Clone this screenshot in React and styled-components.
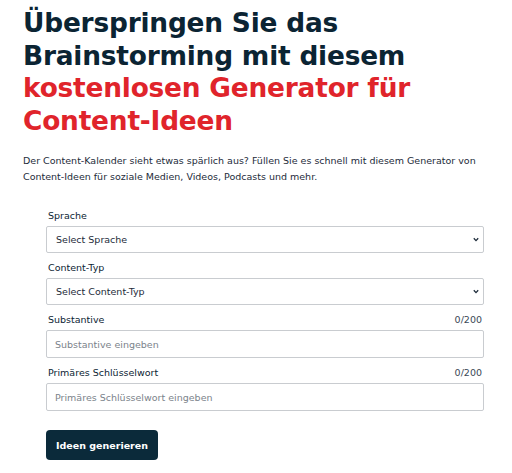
import React from 'react';
import styled, { createGlobalStyle } from 'styled-components';

const GlobalStyle = createGlobalStyle`
  html, body {
    margin: 0;
    padding: 0;
    background: #ffffff;
  }
  * {
    box-sizing: border-box;
  }
`;

const Page = styled.div`
  padding: 7px 23px 0 23px;
  font-family: "DejaVu Sans", "Open Sans", sans-serif;
  color: #0b2433;
`;

const Heading = styled.h1`
  margin: 0;
  font-size: 26.4px;
  line-height: 32.5px;
  font-weight: 700;
  letter-spacing: -0.2px;
  color: #0b2433;
`;

const Accent = styled.span`
  color: #e0242b;
`;

const Intro = styled.p`
  margin: 16px 0 0 0;
  font-size: 9.5px;
  line-height: 16px;
  color: #1d2b3a;
`;

const Form = styled.form`
  margin: 24px 0 0 23px;
  width: 438px;
  display: flex;
  flex-direction: column;
`;

const Field = styled.div`
  display: flex;
  flex-direction: column;
  margin-bottom: 8px;
`;

const LabelRow = styled.div`
  display: flex;
  justify-content: space-between;
  align-items: baseline;
  padding: 0 2px;
  font-size: 9.5px;
  line-height: 13px;
  margin-bottom: 4px;
  color: #0b2433;
`;

const Counter = styled.span`
  color: #3a4856;
`;

const SelectWrap = styled.div`
  position: relative;
`;

const Select = styled.select`
  appearance: none;
  width: 100%;
  height: 27px;
  padding: 0 20px 0 9px;
  border: 1px solid #c9ccd0;
  border-radius: 2px;
  background: #ffffff;
  font-family: inherit;
  font-size: 9.5px;
  color: #1d2b3a;
  outline: none;
`;

const Chevron = styled.svg`
  position: absolute;
  right: 5px;
  top: 11px;
  width: 6px;
  height: 5px;
  pointer-events: none;
`;

const Input = styled.input`
  width: 100%;
  height: 28px;
  padding: 0 8px;
  border: 1px solid #c9ccd0;
  border-radius: 2px;
  font-family: inherit;
  font-size: 9.5px;
  color: #1d2b3a;
  outline: none;
  &::placeholder {
    color: #7b838b;
  }
`;

const Button = styled.button`
  align-self: flex-start;
  margin-top: 11px;
  width: 112px;
  height: 30px;
  border: none;
  border-radius: 4px;
  background: #0b2a3a;
  color: #ffffff;
  font-family: inherit;
  font-weight: 700;
  font-size: 9.5px;
  cursor: pointer;
`;

const SelectField = ({ label, placeholder }) => (
  <Field>
    <LabelRow>
      <span>{label}</span>
    </LabelRow>
    <SelectWrap>
      <Select defaultValue="">
        <option value="">{placeholder}</option>
      </Select>
      <Chevron viewBox="0 0 6 5">
        <path d="M0.8 1.2 L3 3.6 L5.2 1.2" fill="none" stroke="#1d2b3a" strokeWidth="1.3" />
      </Chevron>
    </SelectWrap>
  </Field>
);

const TextField = ({ label, placeholder }) => (
  <Field>
    <LabelRow>
      <span>{label}</span>
      <Counter>0/200</Counter>
    </LabelRow>
    <Input placeholder={placeholder} />
  </Field>
);

export default function App() {
  return (
    <>
      <GlobalStyle />
      <Page>
        <Heading>
          Überspringen Sie das<br />
          Brainstorming mit diesem<br />
          <Accent>kostenlosen Generator für<br />Content-Ideen</Accent>
        </Heading>
        <Intro>
          Der Content-Kalender sieht etwas spärlich aus? Füllen Sie es schnell mit diesem Generator von
          Content-Ideen für soziale Medien, Videos, Podcasts und mehr.
        </Intro>
        <Form onSubmit={e => e.preventDefault()}>
          <SelectField label="Sprache" placeholder="Select Sprache" />
          <SelectField label="Content-Typ" placeholder="Select Content-Typ" />
          <TextField label="Substantive" placeholder="Substantive eingeben" />
          <TextField label="Primäres Schlüsselwort" placeholder="Primäres Schlüsselwort eingeben" />
          <Button type="submit">Ideen generieren</Button>
        </Form>
      </Page>
    </>
  );
}
